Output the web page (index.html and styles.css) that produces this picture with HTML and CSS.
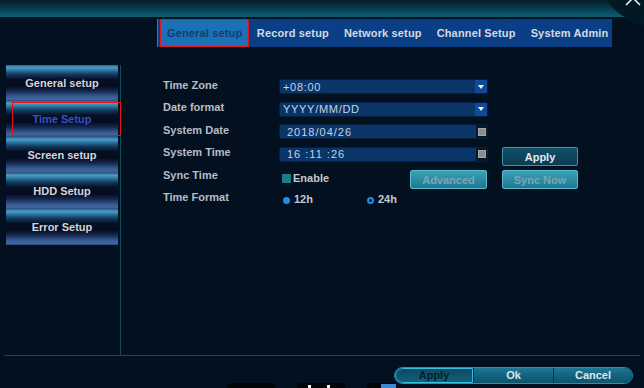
FILE: index.html
```html
<!DOCTYPE html>
<html>
<head>
<meta charset="utf-8">
<link rel="stylesheet" href="styles.css">
</head>
<body>
<div class="screen">
  <header class="topbar">
    <div class="corner">
      <svg class="close" width="20" height="10" viewBox="0 0 20 10"><path d="M3 7 L13 -3 M17 7 L7 -3" stroke="#e8eef2" stroke-width="1.6" fill="none"/></svg>
    </div>
  </header>
  <nav class="tabs">
    <div class="tab active">General setup</div>
    <div class="tab">Record setup</div>
    <div class="tab">Network setup</div>
    <div class="tab">Channel Setup</div>
    <div class="tab">System Admin</div>
  </nav>
  <main class="main">
    <aside class="side">
      <div class="side-btn">General setup</div>
      <div class="side-btn selected">Time Setup</div>
      <div class="side-btn">Screen setup</div>
      <div class="side-btn">HDD Setup</div>
      <div class="side-btn">Error Setup</div>
    </aside>
    <section class="form">
      <div class="grid">
        <div class="label">Time Zone</div>
        <div class="field select"><span class="val">+08:00</span><span class="arrow"></span></div>
        <div></div>

        <div class="label">Date format</div>
        <div class="field select"><span class="val">YYYY/MM/DD</span><span class="arrow"></span></div>
        <div></div>

        <div class="label">System Date</div>
        <div class="field spin"><span class="val">2018/04/26</span><span class="knob"><i></i></span></div>
        <div></div>

        <div class="label">System Time</div>
        <div class="field spin"><span class="val">16 :11 :26</span><span class="knob"><i></i></span></div>
        <div class="btn apply">Apply</div>

        <div class="label">Sync Time</div>
        <div class="sync">
          <span class="check"></span><span class="opt">Enable</span>
          <span class="btn dim adv">Advanced</span>
        </div>
        <div class="btn dim">Sync Now</div>

        <div class="label">Time Format</div>
        <div class="radios">
          <span class="radio-item first"><span class="radio on"></span><span class="opt">12h</span></span>
          <span class="radio-item"><span class="radio ring"></span><span class="opt">24h</span></span>
        </div>
        <div></div>
      </div>
    </section>
  </main>
  <footer class="footer">
    <div class="pill">
      <div class="seg seg-apply">Apply</div>
      <div class="seg">Ok</div>
      <div class="seg seg-last">Cancel</div>
    </div>
  </footer>
  <div class="task t1"></div>
  <div class="task t2"><i class="bar b1"></i><i class="bar b2"></i></div>
  <div class="task t3"><i class="sq"></i></div>
</div>
</body>
</html>
```
FILE: styles.css
```css
html, body {
  margin: 0;
  padding: 0;
}
body {
  background: #03101f;
  width: 644px;
  height: 388px;
  overflow: hidden;
  font-family: "Liberation Sans", Arial, sans-serif;
}
.screen {
  position: relative;
  width: 644px;
  height: 388px;
  overflow: hidden;
}
.topbar {
  height: 17px;
  background: linear-gradient(#031c28, #0a5568 85%, #0d6074);
  position: relative;
}
.corner {
  position: absolute;
  left: 595px;
  top: -95px;
  width: 120px;
  height: 120px;
  border-radius: 50%;
  background: #021822;
  box-shadow: 0 0 2px #0a3a48;
}
.close {
  position: absolute;
  left: 28px;
  top: 93px;
}
.tabs {
  display: flex;
  margin: 2px 0 0 157px;
  width: 455px;
  height: 28px;
  background: #0a3f86;
  border-left: 1px solid #2a7ac0;
  padding-left: 2px;
  box-sizing: border-box;
}
.tab {
  display: flex;
  align-items: center;
  padding: 0 7.5px;
  color: #d4dae2;
  font-weight: bold;
  font-size: 11px;
  letter-spacing: 0.15px;
  white-space: nowrap;
}
.tab.active {
  background: #1c71b6;
  color: #113f6c;
  border: 1px solid #e3131b;
  padding: 0 6px;
}
.main {
  display: flex;
  margin: 18px 4px 0 4px;
  height: 290px;
  border-bottom: 1.5px solid #0d4c5c;
}
.side {
  width: 117px;
  padding-left: 2px;
  box-sizing: border-box;
  border-right: 1.5px solid #0d4d5c;
}
.side-btn {
  position: relative;
  width: 112px;
  height: 36px;
  display: flex;
  align-items: center;
  justify-content: center;
  color: #d2d6dc;
  font-weight: bold;
  font-size: 11px;
  background: linear-gradient(to bottom,
    #1f6a94 0%, #4a9cc6 7%, #2e7aa4 14%, #123a5c 26%, #060f24 40%,
    #050b1e 58%, #14264e 72%, #34588e 86%, #4467a0 95%, #2b4a7c 100%);
}
.side-btn.selected {
  color: #3652c8;
}
.side-btn.selected::after {
  content: "";
  position: absolute;
  left: 6px;
  top: 1px;
  width: 107px;
  height: 32px;
  border: 1px solid #e3131b;
}
.form {
  padding: 10.25px 0 0 42px;
}
.grid {
  display: grid;
  grid-template-columns: 102px 207px 76px;
  column-gap: 15px;
  grid-auto-rows: 22.5px;
  align-items: center;
}
.label {
  color: #b8bdc5;
  font-weight: bold;
  font-size: 11px;
  white-space: nowrap;
  padding-bottom: 4px;
}
.field {
  height: 13px;
  display: flex;
  align-items: center;
  background: #0a3568;
  box-shadow: 0 0 2px #0c3f7c;
  color: #c6d1e4;
  font-size: 11px;
  letter-spacing: 0.7px;
}
.field .val {
  flex: 1;
  padding-left: 3px;
  white-space: nowrap;
}
.spin .val {
  padding-left: 7px;
  letter-spacing: 1px;
}
.arrow {
  width: 12px;
  height: 13px;
  background: #0e4a98;
  display: flex;
  align-items: center;
  justify-content: center;
}
.arrow::before {
  content: "";
  border-left: 3.5px solid transparent;
  border-right: 3.5px solid transparent;
  border-top: 4px solid #f0f4fa;
}
.knob {
  width: 11px;
  height: 13px;
  background: #06172a;
  display: flex;
  align-items: center;
  justify-content: center;
}
.knob i {
  width: 6px;
  height: 6px;
  background: #8a8c8e;
  border: 1px solid #a4a6a8;
}
.btn {
  height: 19px;
  box-sizing: border-box;
  display: flex;
  align-items: center;
  justify-content: center;
  font-weight: bold;
  font-size: 11px;
  border-radius: 2px;
  white-space: nowrap;
}
.apply {
  margin-top: 5px;
  background: linear-gradient(#0f5068, #0a3c52);
  border: 1px solid #3e93aa;
  color: #e2eaee;
}
.dim {
  margin-top: 6px;
  background: linear-gradient(#3aa2b8, #1f7690);
  border: 1px solid #58bccf;
  color: #7aa6b4;
}
.sync {
  display: flex;
  align-items: center;
}
.check {
  width: 9px;
  height: 9px;
  margin-left: 2px;
  background: #1d7c8b;
  margin-top: 3px;
}
.opt {
  color: #c3c8cf;
  font-weight: bold;
  font-size: 11px;
  margin-left: 2px;
}
.sync .opt {
  margin-top: 2px;
}
.adv {
  width: 77px;
  margin-left: auto;
}
.radios {
  display: flex;
  align-items: center;
}
.radio-item {
  display: flex;
  align-items: center;
}
.radio-item.first {
  width: 84px;
  padding-left: 3px;
}
.radio {
  width: 7px;
  height: 7px;
  border-radius: 50%;
  box-sizing: border-box;
  margin-right: 2px;
  margin-top: 2px;
}
.radio.on {
  background: #1f8ee6;
}
.radio.ring {
  border: 2px solid #1f8ee6;
  background: #06172a;
}
.footer {
  display: flex;
  justify-content: flex-end;
  padding: 10.5px 11px 0 0;
}
.pill {
  display: flex;
  height: 17px;
  border-radius: 9px;
  overflow: hidden;
  border: 1px solid #2a8fae;
  box-sizing: border-box;
}
.seg {
  width: 80px;
  display: flex;
  align-items: center;
  justify-content: center;
  background: linear-gradient(#1d7896, #125f7a 60%, #0f566f);
  color: #dde6ea;
  font-weight: bold;
  font-size: 11px;
  border-left: 1px solid #0a3444;
  box-sizing: border-box;
}
.seg-apply {
  width: 78px;
  border: 1.5px solid #34c0de;
  border-radius: 9px 0 0 9px;
  background: linear-gradient(#0c4a62, #135f7a);
  color: #03202c;
}
.seg-last {
  width: 79px;
}
.task {
  position: absolute;
  top: 383px;
  width: 48px;
  height: 12px;
  border-radius: 4px;
  background: #000509;
}
.t1 { left: 227px; }
.t2 { left: 297px; }
.t3 { left: 367px; width: 30px; }
.bar {
  position: absolute;
  top: 2px;
  width: 3px;
  height: 8px;
  background: #f2f4f6;
}
.b1 { left: 11px; }
.b2 { left: 30px; }
.sq {
  position: absolute;
  left: 14px;
  top: 1px;
  width: 15px;
  height: 10px;
  background: #3a8ad6;
}
```
